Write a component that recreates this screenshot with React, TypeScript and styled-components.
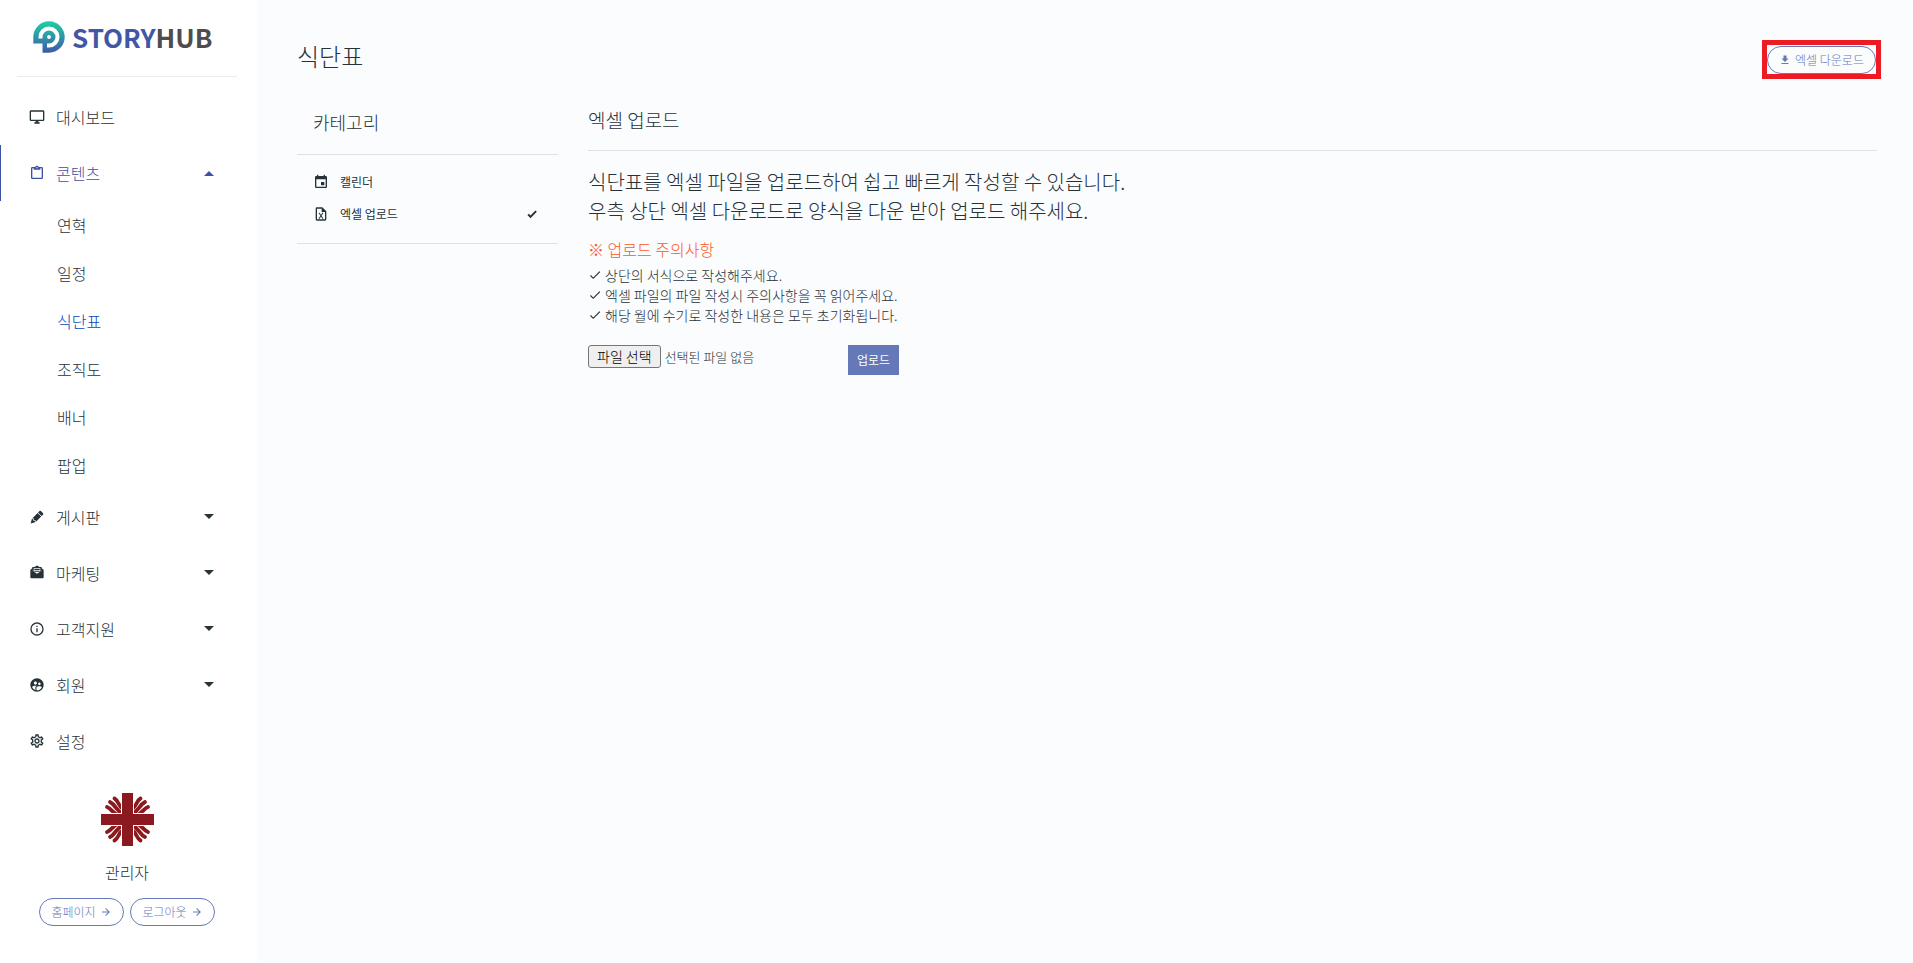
import React, { useId, useState } from "react";
import styled, { createGlobalStyle, css } from "styled-components";
import { MdOutlineSettings, MdSupervisedUserCircle } from "react-icons/md";

const color = {
  text: "#263238",
  blue: "#3f51a5",
  link: "#0747b8",
  pill: "#6578b8",
  line: "#dee2e6",
  warn: "#ff5722",
  mark: "#ed1c24",
};

const GlobalStyle = createGlobalStyle`
  *, *::before, *::after { box-sizing: border-box; }
  body {
    margin: 0;
    background: #fbfcfe;
    color: ${color.text};
    font-family: "Noto Sans CJK KR", "Noto Sans", sans-serif;
    font-size: 16px;
    font-weight: 300;
    line-height: 24px;
  }
  h1, h2, p, ul { margin: 0; padding: 0; font-weight: inherit; }
  ul { list-style: none; }
  a { color: inherit; text-decoration: none; }
  button { font: inherit; cursor: pointer; }
`;

/* ---------- icons ---------- */

const paths = {
  monitor:
    "M21,16H3V4H21M21,2H3C1.89,2 1,2.89 1,4V16A2,2 0 0,0 3,18H10V20H8V22H16V20H14V18H21A2,2 0 0,0 23,16V4C23,2.89 22.1,2 21,2Z",
  clipboard:
    "M19,3H14.82C14.4,1.84 13.3,1 12,1C10.7,1 9.6,1.84 9.18,3H5A2,2 0 0,0 3,5V19A2,2 0 0,0 5,21H19A2,2 0 0,0 21,19V5A2,2 0 0,0 19,3M12,3A1,1 0 0,1 13,4A1,1 0 0,1 12,5A1,1 0 0,1 11,4A1,1 0 0,1 12,3M7,7H17V5H19V19H5V5H7V7Z",
  pencil:
    "M16.84,2.73C16.45,2.73 16.07,2.88 15.77,3.17L13.65,5.29L18.95,10.6L21.07,8.5C21.67,7.89 21.67,6.94 21.07,6.36L17.9,3.17C17.6,2.88 17.22,2.73 16.84,2.73M12.94,6L4.84,14.11L7.4,14.39L7.58,16.68L9.86,16.85L10.15,19.41L18.25,11.3M4.25,15.04L2.5,21.73L9.2,19.94L8.96,17.78L6.65,17.61L6.47,15.29",
  mail:
    "M12 .64L8.23 3H5V5L2.97 6.29C2.39 6.64 2 7.27 2 8V18C2 19.11 2.9 20 4 20H20C21.11 20 22 19.11 22 18V8C22 7.27 21.61 6.64 21.03 6.29L19 5V3H15.77M7 5H17V9.88L12 13L7 9.88M8 6V7.5H16V6M5 7.38V8.63L4 8M19 7.38L20 8L19 8.63M8 8.5V10H16V8.5Z",
  info:
    "M11,9H13V7H11M12,20C7.59,20 4,16.41 4,12C4,7.59 7.59,4 12,4C16.41,4 20,7.59 20,12C20,16.41 16.41,20 12,20M12,2A10,10 0 0,0 2,12A10,10 0 0,0 12,22A10,10 0 0,0 22,12A10,10 0 0,0 12,2M11,17H13V11H11V17Z",
  calendar:
    "M19,19H5V8H19M16,1V3H8V1H6V3H5C3.89,3 3,3.89 3,5V19A2,2 0 0,0 5,21H19A2,2 0 0,0 21,19V5C21,3.89 20.1,3 19,3H18V1M17,12H12V17H17V12Z",
  excel:
    "M14,2H6A2,2 0 0,0 4,4V20A2,2 0 0,0 6,22H18A2,2 0 0,0 20,20V8L14,2M18,20H6V4H13V9H18V20M12.9,14.5L15.8,19H14L12,15.6L10,19H8.2L11.1,14.5L8.2,10H10L12,13.4L14,10H15.8L12.9,14.5Z",
  check: "M21,7L9,19L3.5,13.5L4.91,12.09L9,16.17L19.59,5.59L21,7Z",
  checkBold: "M9,20.42L2.79,14.21L5.62,11.38L9,14.77L18.88,4.88L21.71,7.71L9,20.42Z",
  arrow: "M4,11V13H16L10.5,18.5L11.92,19.92L19.84,12L11.92,4.08L10.5,5.5L16,11H4Z",
  download: "M5,20H19V18H5M19,9H15V3H9V9H5L12,16L19,9Z",
  caretDown: "M7,9L12,14L17,9H7Z",
  caretUp: "M7,15L12,10L17,15H7Z",
};

const Svg = styled.svg`
  display: block;
  flex: none;
  fill: currentColor;
`;

function Icon({ name, size = 16 }: { name: keyof typeof paths; size?: number }) {
  return (
    <Svg width={size} height={size} viewBox="0 0 24 24" aria-hidden="true">
      <path d={paths[name]} />
    </Svg>
  );
}

function LogoMark() {
  return (
    <Svg width="32" height="32" viewBox="0 0 32 32" aria-hidden="true">
      <defs>
        <linearGradient id="mark" x1="0" y1="0" x2="0" y2="1">
          <stop offset="0" stopColor="#1fd0a4" />
          <stop offset="1" stopColor="#3f59a8" />
        </linearGradient>
      </defs>
      <path
        fill="url(#mark)"
        fillRule="evenodd"
        d="M0.3 22.5V16A15.7 15.7 0 1 1 16 31.7H9.5V22.500ZM5.5 17.500V16A10.500 10.500 0 1 1 16 26.500H14V22.500H16A6.500 6.500 0 1 0 9.500 16V17.500ZM16 14.100A1.900 1.900 0 1 0 16 17.900A1.900 1.900 0 1 0 16 14.100Z"
      />
    </Svg>
  );
}

function Emblem() {
  const flames = (
    <>
      <path d="M31 16C36 13 35 8 39.500 5.500" />
      <path d="M31 21C39 17 38 12 44 9" />
      <path d="M35 23C43 19 42 16 47 14" />
    </>
  );
  return (
    <Svg width="53" height="53" viewBox="0 0 53 53" role="img" aria-label="관리자">
      <g fill="none" stroke="#8a1a1f" strokeWidth="3.800" strokeLinecap="round">
        <g>{flames}</g>
        <g transform="translate(53 0) scale(-1 1)">{flames}</g>
        <g transform="translate(0 53) scale(1 -1)">{flames}</g>
        <g transform="translate(53 53) scale(-1 -1)">{flames}</g>
      </g>
      <path fill="#fff" d="M20 0H33V20H53V33H33V53H20V33H0V20H20Z" />
      <path fill="#8a1a1f" d="M21 0H32V21H53V32H32V53H21V32H0V21H21Z" />
    </Svg>
  );
}

/* ---------- sidebar ---------- */

const Page = styled.div`
  display: flex;
  min-height: 100vh;
`;

const Sidebar = styled.aside`
  flex: none;
  width: 257px;
  background: #fff;
`;

const Brand = styled.a`
  display: flex;
  align-items: center;
  gap: 7px;
  height: 77px;
  margin: 0 20px 12px 17px;
  padding: 0 0 2px 16px;
  border-bottom: 1px solid #e9ebed;
`;

const BrandName = styled.span`
  color: #3f57a6;
  font-size: 26px;
  font-weight: 700;
  b {
    color: #4d4d4f;
    font-weight: inherit;
  }
`;

const navItem = css<{ $active?: boolean }>`
  display: flex;
  align-items: center;
  width: 100%;
  height: 56px;
  padding: 0 36px 0 28px;
  border: 0;
  border-left: 1px solid ${(p) => (p.$active ? color.blue : "transparent")};
  background: none;
  color: ${(p) => (p.$active ? color.blue : color.text)};
  text-align: left;
`;

const NavLink = styled.a<{ $active?: boolean }>`
  ${navItem}
`;

const NavButton = styled.button<{ $active?: boolean }>`
  ${navItem}
`;

const NavLabel = styled.span`
  flex: 1;
  padding-left: 11px;
`;

const SubLink = styled.a<{ $active?: boolean }>`
  display: flex;
  align-items: center;
  height: 48px;
  padding-left: 57px;
  color: ${(p) => (p.$active ? color.link : color.text)};
`;

const Profile = styled.section`
  display: flex;
  flex-direction: column;
  align-items: center;
  gap: 14px;
  padding: 24px 3px 36px 0;
`;

const PillRow = styled.div`
  display: flex;
  gap: 6px;
`;

const Pill = styled.button<{ $wide?: boolean }>`
  display: flex;
  align-items: center;
  justify-content: center;
  gap: 4px;
  width: ${(p) => (p.$wide ? 109 : 85)}px;
  height: 28px;
  padding: 0;
  border: 1px solid ${color.pill};
  border-radius: 14px;
  background: transparent;
  color: ${color.pill};
  font-size: 12px;
  line-height: 16px;
`;

type Entry = { label: string; icon: React.ReactNode; children?: string[]; expandable?: boolean };

const menu: Entry[] = [
  { label: "대시보드", icon: <Icon name="monitor" /> },
  {
    label: "콘텐츠",
    icon: <Icon name="clipboard" />,
    expandable: true,
    children: ["연혁", "일정", "식단표", "조직도", "배너", "팝업"],
  },
  { label: "게시판", icon: <Icon name="pencil" />, expandable: true },
  { label: "마케팅", icon: <Icon name="mail" />, expandable: true },
  { label: "고객지원", icon: <Icon name="info" />, expandable: true },
  { label: "회원", icon: <MdSupervisedUserCircle size={16} />, expandable: true },
  { label: "설정", icon: <MdOutlineSettings size={16} /> },
];

function NavEntry({ entry }: { entry: Entry }) {
  const [open, setOpen] = useState(Boolean(entry.children));
  if (!entry.expandable) {
    return (
      <li>
        <NavLink href="#">
          {entry.icon}
          <NavLabel>{entry.label}</NavLabel>
        </NavLink>
      </li>
    );
  }
  return (
    <li>
      <NavButton type="button" $active={open} aria-expanded={open} onClick={() => setOpen(!open)}>
        {entry.icon}
        <NavLabel>{entry.label}</NavLabel>
        <Icon name={open ? "caretUp" : "caretDown"} size={24} />
      </NavButton>
      {open && entry.children && (
        <ul>
          {entry.children.map((label) => (
            <li key={label}>
              <SubLink href="#" $active={label === "식단표"}>
                {label}
              </SubLink>
            </li>
          ))}
        </ul>
      )}
    </li>
  );
}

/* ---------- content ---------- */

const Main = styled.main`
  flex: 1;
  min-width: 0;
  padding: 40px 36px 40px 40px;
`;

const TitleBar = styled.header`
  display: flex;
  align-items: flex-start;
  justify-content: space-between;
  margin-bottom: 20px;
`;

const Title = styled.h1`
  font-size: 24px;
  line-height: 32px;
`;

const Highlight = styled.div`
  margin-right: -4px;
  padding: 1px 0 0;
  border: 5px solid ${color.mark};
`;

const Columns = styled.div`
  display: flex;
  align-items: flex-start;
  gap: 30px;
`;

const Category = styled.nav`
  flex: none;
  width: 261px;
  border-bottom: 1px solid ${color.line};
`;

const CategoryTitle = styled.h2`
  padding: 10px 16px 19px;
  border-bottom: 1px solid ${color.line};
  font-size: 18px;
  line-height: 26px;
`;

const CategoryList = styled.ul`
  padding: 11px 20px 13px 16px;
`;

const CategoryLink = styled.a`
  display: flex;
  align-items: center;
  height: 32px;
  font-size: 12px;
  font-weight: 400;
  span {
    flex: 1;
    padding-left: 11px;
  }
`;

const Panel = styled.section`
  flex: 1;
  min-width: 0;
`;

const PanelTitle = styled.h2`
  margin-bottom: 16px;
  padding: 8px 0 17px;
  border-bottom: 1px solid ${color.line};
  font-size: 19px;
  line-height: 26px;
`;

const Lead = styled.p`
  font-size: 20px;
  line-height: 29px;
`;

const Warning = styled.h2`
  margin: 12px 0 4px;
  color: ${color.warn};
  font-size: 16px;
`;

const Notes = styled.ul`
  font-size: 14px;
  line-height: 20px;
  li {
    display: flex;
    align-items: center;
    gap: 3px;
  }
`;

const UploadForm = styled.form`
  display: flex;
  align-items: flex-start;
  justify-content: space-between;
  width: 311px;
  margin-top: 20px;
`;

const FileField = styled.label`
  display: flex;
  align-items: center;
  gap: 4px;
  font-size: 13px;
  line-height: 20px;
  cursor: pointer;
`;

const FileInput = styled.input`
  position: absolute;
  width: 1px;
  height: 1px;
  opacity: 0;
`;

const FileButton = styled.span`
  padding: 1px 8px;
  border: 1px solid #767676;
  border-radius: 3px;
  background: #efefef;
  color: #000;
  font-size: 14px;
  line-height: 19px;
`;

const Submit = styled.button`
  height: 30px;
  padding: 0 9px;
  border: 0;
  background: ${color.pill};
  color: #fff;
  font-size: 12px;
  font-weight: 400;
`;

const notes = [
  "상단의 서식으로 작성해주세요.",
  "엑셀 파일의 파일 작성시 주의사항을 꼭 읽어주세요.",
  "해당 월에 수기로 작성한 내용은 모두 초기화됩니다.",
];

export default function App() {
  const fileId = useId();
  const [fileName, setFileName] = useState("선택된 파일 없음");

  return (
    <>
      <GlobalStyle />
      <Page>
        <Sidebar>
          <Brand href="#">
            <LogoMark />
            <BrandName>
              STORY<b>HUB</b>
            </BrandName>
          </Brand>
          <nav>
            <ul>
              {menu.map((entry) => (
                <NavEntry key={entry.label} entry={entry} />
              ))}
            </ul>
          </nav>
          <Profile>
            <Emblem />
            <p>관리자</p>
            <PillRow>
              <Pill type="button">
                홈페이지
                <Icon name="arrow" size={12} />
              </Pill>
              <Pill type="button">
                로그아웃
                <Icon name="arrow" size={12} />
              </Pill>
            </PillRow>
          </Profile>
        </Sidebar>

        <Main>
          <TitleBar>
            <Title>식단표</Title>
            <Highlight>
              <Pill type="button" $wide>
                <Icon name="download" size={12} />
                엑셀 다운로드
              </Pill>
            </Highlight>
          </TitleBar>

          <Columns>
            <Category>
              <CategoryTitle>카테고리</CategoryTitle>
              <CategoryList>
                <li>
                  <CategoryLink href="#">
                    <Icon name="calendar" />
                    <span>캘린더</span>
                  </CategoryLink>
                </li>
                <li>
                  <CategoryLink href="#" aria-current="page">
                    <Icon name="excel" />
                    <span>엑셀 업로드</span>
                    <Icon name="checkBold" size={12} />
                  </CategoryLink>
                </li>
              </CategoryList>
            </Category>

            <Panel>
              <PanelTitle>엑셀 업로드</PanelTitle>
              <Lead>
                식단표를 엑셀 파일을 업로드하여 쉽고 빠르게 작성할 수 있습니다.
                <br />
                우측 상단 엑셀 다운로드로 양식을 다운 받아 업로드 해주세요.
              </Lead>
              <Warning>※ 업로드 주의사항</Warning>
              <Notes>
                {notes.map((note) => (
                  <li key={note}>
                    <Icon name="check" size={14} />
                    {note}
                  </li>
                ))}
              </Notes>
              <UploadForm onSubmit={(e) => e.preventDefault()}>
                <FileField htmlFor={fileId}>
                  <FileInput
                    id={fileId}
                    type="file"
                    accept=".xls,.xlsx"
                    onChange={(e) => setFileName(e.target.files?.[0]?.name ?? "선택된 파일 없음")}
                  />
                  <FileButton>파일 선택</FileButton>
                  {fileName}
                </FileField>
                <Submit type="submit">업로드</Submit>
              </UploadForm>
            </Panel>
          </Columns>
        </Main>
      </Page>
    </>
  );
}
